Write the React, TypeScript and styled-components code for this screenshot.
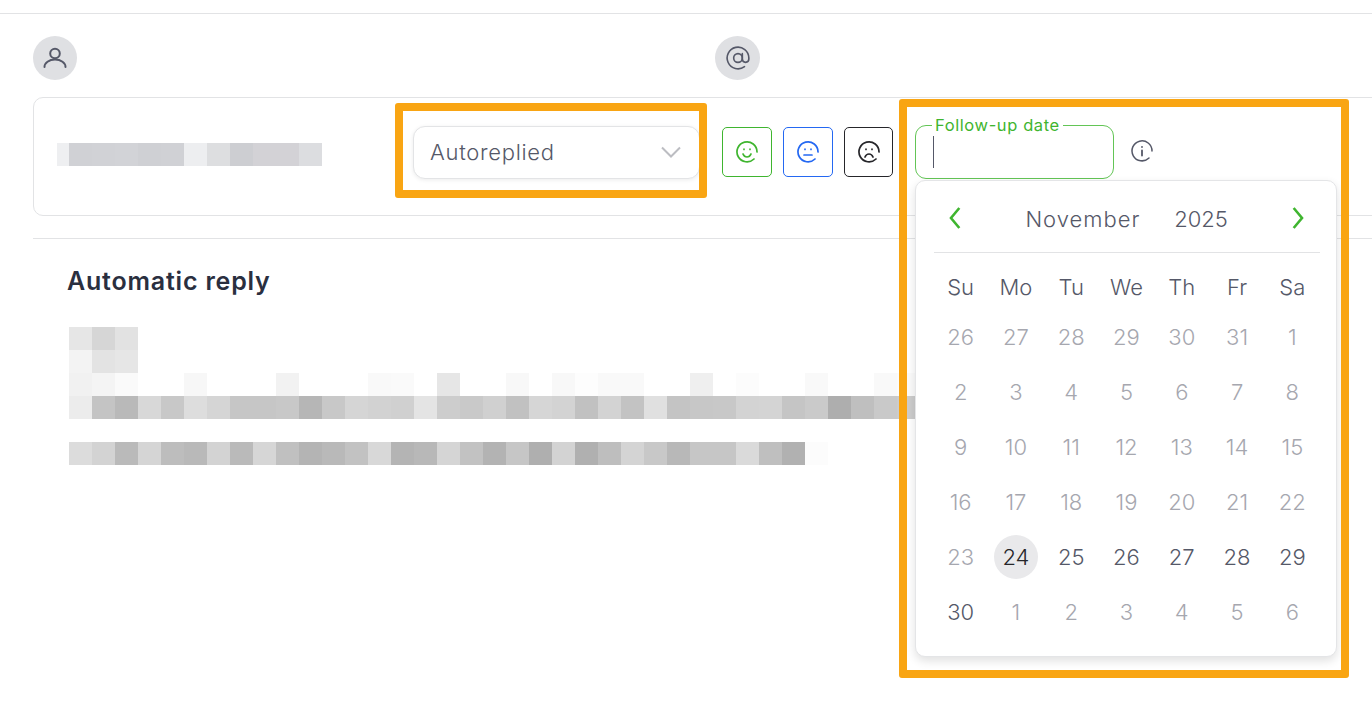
import React from 'react';
import styled, { createGlobalStyle } from 'styled-components';

const colors = {
  rule: '#e2e3e5',
  text: '#555868',
  muted: '#a6a7af',
  heading: '#2a2f3f',
  green: '#3fb52f',
  blue: '#2468f2',
  black: '#26262a',
  orange: '#f9a513',
};

const GlobalStyle = createGlobalStyle`
  html, body {
    margin: 0;
    height: 100%;
    overflow: hidden;
    background: #fff;
  }
  body {
    font-family: Inter, "Noto Sans", "Liberation Sans", sans-serif;
    color: ${colors.text};
  }
`;

// redacted text: the name cell widths and tones, then body rows with
// two hex digits of grey per cell, -- for an empty one
const NAME_CELLS = [
  ['#eeeff1', 12], ['#d0d1d5', 23], ['#d1d2d6', 23], ['#d2d3d7', 23], ['#cfd0d4', 23], ['#d0d1d5', 23],
  ['#edeef0', 23], ['#dddee0', 23], ['#cdced2', 23], ['#d3d2d6', 23], ['#d3d2d6', 23], ['#dcdde0', 23],
] as const;

const BODY_ROWS = [
  'e6 d6 e2',
  'f3 e3 e6',
  'f1 f4 fa -- -- f7 -- -- -- f2 -- -- -- f9 fa -- e6 -- -- f8 -- f8 fd f9 f9 -- -- ef -- fc -- -- f9 -- -- f9 fb',
  'ec c4 b9 d8 c8 dd d5 c6 c6 c8 b6 c8 d5 d2 d0 e4 cd c9 d0 c1 d6 d3 c1 d3 c3 e0 c4 c7 c8 d3 d4 c5 ca ae bf c9 cc',
  '',
  'dc d3 ba d5 bd b9 d3 ba d6 c0 b4 b9 c2 d8 b4 b8 d5 c2 b3 c6 af d3 b0 be d4 c8 b8 c6 c6 da bf b1 fc',
];

const WEEK_DAYS = ['Su', 'Mo', 'Tu', 'We', 'Th', 'Fr', 'Sa'];

const LEADING = [26, 27, 28, 29, 30, 31, 1, 2, 3, 4, 5, 6, 7, 8, 9, 10, 11, 12, 13, 14, 15, 16, 17, 18, 19, 20, 21, 22, 23];
const CURRENT = [24, 25, 26, 27, 28, 29, 30];
const TRAILING = [1, 2, 3, 4, 5, 6];

const Face = ({ mouth }: { mouth: string }) => (
  <svg width="24" height="24" viewBox="0 0 24 24" fill="none" stroke="currentColor" strokeWidth="1.7" strokeLinecap="round">
    <path d="M22 12A10 10 0 1 0 19 19" />
    <path d="M9 9.2v.3M15 9.2v.3" />
    <path d={mouth} />
  </svg>
);

const Chevron = ({ d }: { d: string }) => (
  <svg width="14" height="22" viewBox="0 0 14 22" fill="none" stroke={colors.green} strokeWidth="2.6" strokeLinecap="square">
    <path d={d} />
  </svg>
);

const App = () => {
  return (
    <Page>
      <GlobalStyle />
      <TopRule />
      <IconRow>
        <Avatar $width={44}>
          <svg width="24" height="24" viewBox="0 0 24 24" fill="none" stroke={colors.text} strokeWidth="2" strokeLinecap="round">
            <circle cx="12" cy="7.5" r="4.8" />
            <path d="M1.5 21c0-4 4.5-7.5 10.500-7.500s10.500 3.500 10.500 7.500" />
          </svg>
        </Avatar>
        <Avatar $width={45}>
          <svg width="26" height="26" viewBox="0 0 24 24" fill="none" stroke={colors.text} strokeWidth="1.5" strokeLinecap="round" strokeLinejoin="round">
            <circle cx="12" cy="12" r="4" />
            <path d="M16 8v5a3 3 0 0 0 6 0v-1a10 10 0 1 0-4 8" />
          </svg>
        </Avatar>
      </IconRow>

      <Card>
        <NameSlot>
          {NAME_CELLS.map(([tone, width], i) => (
            <Pixel key={i} $tone={tone} $width={width} />
          ))}
        </NameSlot>

        <SelectWrap>
          <Select>
            <span>Autoreplied</span>
            <svg width="22" height="12" viewBox="0 0 22 12" fill="none" stroke="#bcbdc2" strokeWidth="2">
              <path d="M2 1.500l9 9 9-9" />
            </svg>
          </Select>
          <Highlight $width={312} $height={95} $left={-18} $top={-22} />
        </SelectWrap>

        <Moods>
          <MoodButton $color={colors.green} $width={50}>
            <Face mouth="M8 14c.8 2 2.200 3 4 3s3.200-1 4-3" />
          </MoodButton>
          <MoodButton $color={colors.blue} $width={50}>
            <Face mouth="M8 15h8" />
          </MoodButton>
          <MoodButton $color={colors.black} $width={49}>
            <Face mouth="M8 17c.8-2 2.200-3 4-3s3.200 1 4 3" />
          </MoodButton>
        </Moods>

        <DateWrap>
          <DateField>
            <FloatingLabel>Follow-up date</FloatingLabel>
            <Caret />
          </DateField>

          <Popup>
            <CalendarHeader>
              <Chevron d="M10.500 2L3 11l7.500 9" />
              <MonthLabel>
                <MonthName>November</MonthName>
                <YearName>2025</YearName>
              </MonthLabel>
              <Chevron d="M3.500 2L11 11l-7.500 9" />
            </CalendarHeader>
            <CalendarRule />
            <WeekRow>
              {WEEK_DAYS.map((d) => (
                <Day key={d}>{d}</Day>
              ))}
            </WeekRow>
            <DayGrid>
              {LEADING.map((d, i) => (
                <Day key={`l${i}`} $muted>
                  {d}
                </Day>
              ))}
              {CURRENT.map((d) => (
                <Day key={`c${d}`} $today={d === 24}>
                  {d}
                </Day>
              ))}
              {TRAILING.map((d) => (
                <Day key={`t${d}`} $muted>
                  {d}
                </Day>
              ))}
            </DayGrid>
          </Popup>
          <Highlight $width={450} $height={579} $left={-16} $top={-26} />
        </DateWrap>

        <InfoIcon>
          <svg width="24" height="24" viewBox="0 0 24 24" fill="none" stroke={colors.text} strokeWidth="1.500" strokeLinecap="round">
            <path d="M22 12A10 10 0 1 0 19 19" />
            <path d="M12 11.500v5M12 7.800v.2" strokeWidth="1.800" />
          </svg>
        </InfoIcon>
      </Card>

      <SectionRule />

      <Section>
        <Heading>Automatic reply</Heading>
        <Redacted>
          {BODY_ROWS.map((row, r) => (
            <PixelRow key={r}>
              {row.split(' ').filter(Boolean).map((tone, i) => (
                <Pixel key={i} $tone={tone === '--' ? 'transparent' : `#${tone}${tone}${tone}`} $width={23} />
              ))}
            </PixelRow>
          ))}
        </Redacted>
      </Section>
    </Page>
  );
};

export default App;

/** Page frame */
const Page = styled.div`
  padding-top: 13px;
  width: 1372px;
  height: 705px;
  overflow: hidden;
`;

const TopRule = styled.div`
  height: 1px;
  background: ${colors.rule};
`;

const IconRow = styled.div`
  display: grid;
  grid-template-columns: 682px 1fr;
  margin: 22px 0 17px 33px;
`;

const Avatar = styled.div<{ $width: number }>`
  display: flex;
  align-items: center;
  justify-content: center;
  width: ${(p) => p.$width}px;
  height: 44px;
  border-radius: 50%;
  background: #dfe0e3;
`;

/** Ticket row */
const Card = styled.div`
  display: flex;
  align-items: flex-start;
  box-sizing: border-box;
  width: 1400px;
  height: 119px;
  margin-left: 33px;
  padding: 27px 0 0 23px;
  border: 1px solid ${colors.rule};
  border-radius: 10px;
`;

const NameSlot = styled.div`
  display: flex;
  width: 356px;
  margin-top: 18px;
`;

const Pixel = styled.div<{ $tone: string; $width: number }>`
  flex: none;
  width: ${(p) => p.$width}px;
  height: 23px;
  background: ${(p) => p.$tone};
`;

const SelectWrap = styled.div`
  position: relative;
  margin-right: 22px;
`;

const Select = styled.div`
  display: flex;
  align-items: center;
  justify-content: space-between;
  box-sizing: border-box;
  width: 287px;
  height: 53px;
  padding: 0 17px 2px 16px;
  margin-top: 1px;
  border: 1px solid #e3e4e6;
  border-radius: 12px;
  background: #fff;
  box-shadow: 0 1px 4px rgba(0, 0, 0, 0.08);
  font-size: 22px;
  font-weight: 350;
  letter-spacing: 0.7px;
`;

const Highlight = styled.div<{ $width: number; $height: number; $left: number; $top: number }>`
  position: absolute;
  z-index: 3;
  box-sizing: border-box;
  left: ${(p) => p.$left}px;
  top: ${(p) => p.$top}px;
  width: ${(p) => p.$width}px;
  height: ${(p) => p.$height}px;
  border: 8px solid ${colors.orange};
  border-radius: 3px;
  pointer-events: none;
`;

const Moods = styled.div`
  display: flex;
  gap: 11px;
  margin: 2px 22px 0 0;
`;

const MoodButton = styled.button<{ $color: string; $width: number }>`
  display: flex;
  align-items: center;
  justify-content: center;
  width: ${(p) => p.$width}px;
  height: 50px;
  padding: 0;
  border: 1px solid ${(p) => p.$color};
  border-radius: 5px;
  background: #fff;
  color: ${(p) => p.$color};
`;

/** Follow-up date and its open calendar */
const DateWrap = styled.div`
  position: relative;
  margin-right: 16px;
`;

const DateField = styled.div`
  position: relative;
  box-sizing: border-box;
  width: 199px;
  height: 54px;
  padding: 10px 17px;
  border: 1px solid #63c556;
  border-radius: 11px;
`;

const FloatingLabel = styled.span`
  position: absolute;
  left: 16px;
  top: -10px;
  padding: 0 3px;
  background: #fff;
  color: ${colors.green};
  font-size: 16.5px;
  line-height: 18px;
  letter-spacing: 0.6px;
  white-space: nowrap;
`;

const Caret = styled.div`
  width: 1px;
  height: 32px;
  background: ${colors.text};
`;

const Popup = styled.div`
  position: absolute;
  z-index: 2;
  left: 0;
  top: 55px;
  box-sizing: border-box;
  width: 422px;
  height: 477px;
  padding: 0 16px 0 18px;
  border: 1px solid #e4e5e7;
  border-radius: 10px;
  background: #fff;
  box-shadow: 0 4px 10px rgba(0, 0, 0, 0.12);
`;

const CalendarHeader = styled.div`
  display: flex;
  align-items: center;
  justify-content: space-between;
  height: 69px;
  margin-top: -2px;
  padding: 4px 15px 0 14px;
`;

const MonthLabel = styled.div`
  display: flex;
  gap: 34px;
  margin-top: 3px;
  font-size: 22px;
  font-weight: 350;
`;

const MonthName = styled.span`
  letter-spacing: 1px;
`;

const YearName = styled.span`
  letter-spacing: -0.1px;
`;

const CalendarRule = styled.div`
  height: 1px;
  background: ${colors.rule};
`;

const WeekRow = styled.div`
  display: grid;
  grid-template-columns: repeat(7, 1fr);
  margin: 12px 0 6px -1px;
`;

const DayGrid = styled.div`
  display: grid;
  grid-template-columns: repeat(7, 1fr);
  grid-auto-rows: 44px;
  row-gap: 11.1px;
  margin-left: -1px;
`;

const Day = styled.div<{ $muted?: boolean; $today?: boolean }>`
  display: flex;
  align-items: center;
  justify-content: center;
  justify-self: center;
  width: 44px;
  height: 44px;
  border-radius: 50%;
  font-size: 22px;
  font-weight: 350;
  background: ${(p) => (p.$today ? '#e9e9eb' : 'transparent')};
  color: ${(p) => (p.$today ? colors.black : p.$muted ? colors.muted : colors.text)};
`;

const InfoIcon = styled.div`
  display: flex;
  margin-top: 14px;
`;

/** Message body */
const SectionRule = styled.div`
  height: 1px;
  margin: 22px 0 0 33px;
  background: ${colors.rule};
`;

const Section = styled.div`
  padding: 25px 0 0 67px;
`;

const Heading = styled.h2`
  margin: 0;
  color: ${colors.heading};
  font-size: 25px;
  line-height: 34px;
  font-weight: 600;
  letter-spacing: 0.8px;
`;

const Redacted = styled.div`
  margin: 29px 0 0 2px;
`;

const PixelRow = styled.div`
  display: flex;
  height: 23px;
`;
